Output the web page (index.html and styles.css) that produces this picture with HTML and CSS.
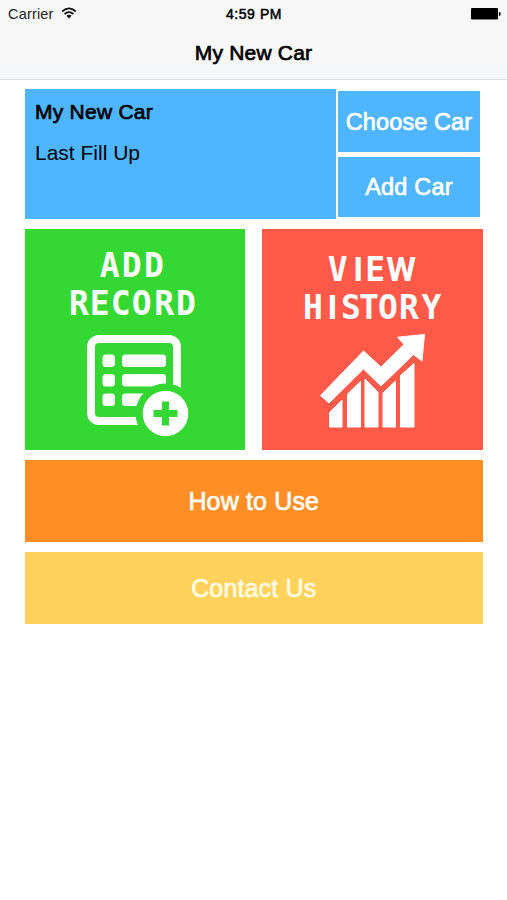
FILE: index.html
```html
<!DOCTYPE html>
<html lang="en">
<head>
<meta charset="utf-8">
<title>My New Car</title>
<link rel="stylesheet" href="styles.css">
</head>
<body>
<header class="top">
  <div class="status">
    <div class="carrier"><span class="carrier-name">Carrier</span>
      <svg class="wifi" viewBox="0 0 16 12"><path d="M1.2 4.5Q8-1.7 14.8 4.5M3.5 7Q8 3.1 12.5 7" fill="none" stroke="#111" stroke-width="1.7"/><path d="M5.4 8.7Q8 6.6 10.6 8.7L8 11.4Z" fill="#111"/></svg>
    </div>
    <time class="clock">4:59 PM</time>
    <svg class="battery" viewBox="0 0 30 12"><rect width="27" height="11.6" rx="1.3"/><path d="M27.9 4Q29.8 4.2 29.8 6T27.9 8Z"/></svg>
  </div>
  <h1 class="title">My New Car</h1>
</header>
<main class="content">
  <section class="car-row">
    <div class="car"><h2 class="car-name">My New Car</h2><p class="fill">Last Fill Up</p></div>
    <div class="actions"><button class="btn choose"><span>Choose Car</span></button><button class="btn add"><span>Add Car</span></button></div>
  </section>
  <section class="tiles">
    <a class="tile record">
      <svg viewBox="0 0 220 221" class="art">
        <g class="pixel">
          <text x="84.7 106.7 129" y="48">ADD</text>
          <text x="54 74.7 95.8 116.7 139.3 161" y="86">RECORD</text>
        </g>
        <rect x="66" y="110" width="86" height="82" rx="8" fill="none" stroke="#fff" stroke-width="8"/>
        <g fill="#fff"><rect x="77.5" y="125.5" width="12.5" height="12.5" rx="3.5"/><rect x="97" y="125.5" width="44" height="12.5" rx="3.5"/><rect x="77.5" y="145" width="12.5" height="12.5" rx="3.5"/><rect x="97" y="145" width="44" height="12.5" rx="3.5"/><rect x="77.5" y="164.5" width="12.5" height="12.5" rx="3.5"/><rect x="97" y="164.5" width="44" height="12.5" rx="3.5"/></g>
        <circle cx="140.500" cy="184.500" r="30" fill="#35d733"/>
        <circle cx="140.500" cy="184.500" r="22.800" fill="#fff"/>
        <path d="M137 172.500h7v8.500h8.500v7H144v8.500h-7V188h-8.500v-7h8.500Z" fill="#35d733"/>
      </svg>
    </a>
    <a class="tile history">
      <svg viewBox="0 0 220 221" class="art">
        <g class="pixel">
          <text x="75.700 96.300 113.300 139" y="52">V<tspan class="plain">I</tspan>E<tspan class="plain">W</tspan></text>
          <text x="51 70.500 89 107 126 147 169.500" y="90">H<tspan class="plain">I</tspan>STORY</text>
        </g>
        <g fill="#fff" stroke="#fff" stroke-width="1" stroke-linejoin="round">
          <path d="M58.500 166.500L101.500 122L119 138L142 115.500L135.500 108.200L162.500 105.500L160 132L151.500 125.500L119 157L101.500 140L67 174Z"/>
          <path d="M67.500 183.500L80 171V198H67.500ZM85.500 165L98.500 152.500V198H85.500ZM103 150L116 163V198H103ZM121 164L133.500 152V198H121ZM138.500 146.500L152 134.500V198H138.500Z"/>
        </g>
      </svg>
    </a>
  </section>
  <button class="btn how"><span>How to Use</span></button>
  <button class="btn contact"><span>Contact Us</span></button>
</main>
</body>
</html>
```
FILE: styles.css
```css
* { box-sizing: border-box; }
body { margin: 0; background: #fff; color: #000; font-family: "Liberation Sans", Arial, sans-serif; }
h1, h2, p { margin: 0; font-weight: 400; }
svg { display: block; }
.top { height: 79.500px; background: linear-gradient(#f8f8f8 0 60px, #f3f7fa 78px); border-bottom: 1px solid #d9dde1; }
.status { display: grid; grid-template-columns: 1fr auto 1fr; align-items: center; height: 28px; padding: 0 6px 0 8px; }
.carrier { display: flex; align-items: center; gap: 7px; font-size: 14.500px; color: #222; }
.carrier-name { letter-spacing: .18px; }
.wifi { width: 16px; height: 12px; margin-top: -3px; }
.clock { font-size: 14px; letter-spacing: .55px; margin-right: 1px; -webkit-text-stroke: .5px #000; }
.battery { width: 30px; height: 12px; justify-self: end; }
.title { text-align: center; font-size: 21px; line-height: 50px; letter-spacing: .2px; -webkit-text-stroke: .7px #000; }
.content { padding: 9.400px 24.500px 0 25px; }
.car-row { display: flex; gap: 2.500px; height: 130.500px; }
.car { width: 310.500px; background: #4fb5ff; padding: 11px 10px; }
.car-name { font-size: 21px; line-height: 24px; letter-spacing: .25px; -webkit-text-stroke: .7px #000; }
.fill { font-size: 21px; line-height: 24px; margin-top: 17px; letter-spacing: 0; }
.actions { display: flex; flex-direction: column; gap: 5px; padding-top: 2.500px; width: 142px; }
.btn { display: flex; align-items: center; justify-content: center; padding: 0; border: 0; color: #fff; font-family: inherit; font-size: 25px; line-height: 28px; letter-spacing: .15px; white-space: nowrap; -webkit-text-stroke: .7px #fff; }
.choose, .add { height: 60.500px; background: #4fb5ff; }
.choose { font-size: 23.500px; letter-spacing: .1px; }
.add { font-size: 23.500px; letter-spacing: .2px; }
.tiles { display: flex; justify-content: space-between; margin-top: 10px; }
.tile { width: 220.300px; height: 221px; }
.record { background: #35d733; }
.history { background: #ff5a49; }
.art { width: 220px; height: 221px; }
.pixel { font: 700 33px "DejaVu Sans Mono", monospace; fill: #fff; text-anchor: middle; }
.plain { font-family: Roboto, sans-serif; font-size: 34px; }
.how { width: 100%; height: 82px; margin-top: 10px; background: #ff8e24; }
.contact { width: 100%; height: 72px; margin-top: 10px; background: #ffd25c; color: #fffbe0; -webkit-text-stroke-color: #fffbe0; }
```
